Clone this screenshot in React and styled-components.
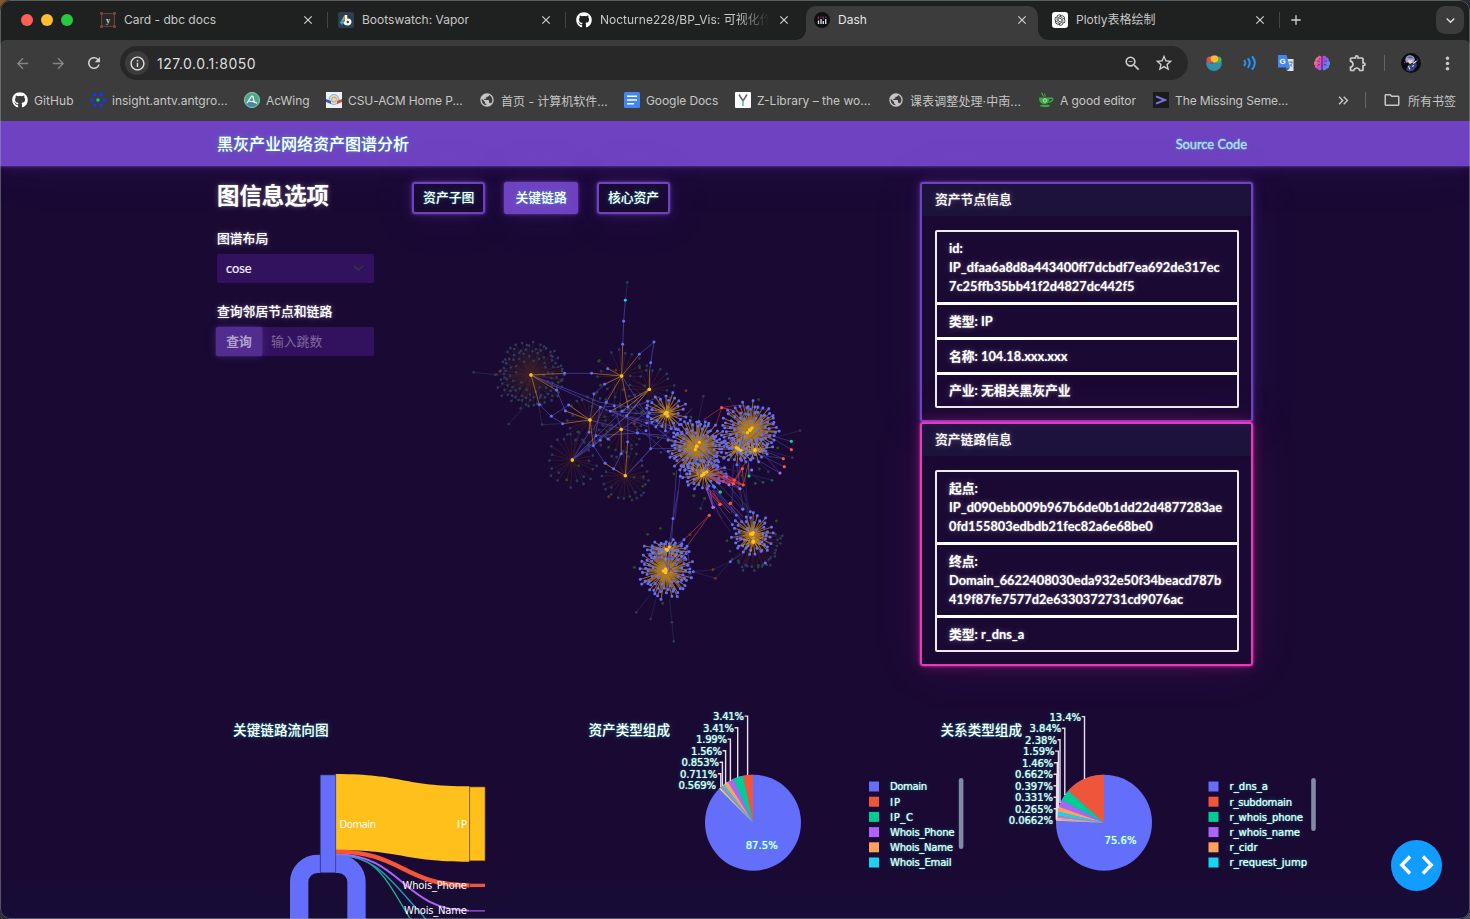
import React from "react";
import styled, { createGlobalStyle, css } from "styled-components";
import {
  MdArrowBack, MdArrowForward, MdRefresh, MdInfoOutline, MdStarBorder, MdZoomOut,
  MdOutlineExtension, MdMoreVert, MdOutlineFolder, MdClose, MdAdd, MdKeyboardArrowDown,
  MdPublic, MdKeyboardDoubleArrowRight,
} from "react-icons/md";
import { FaGithub } from "react-icons/fa";
import { RiOpenaiFill } from "react-icons/ri";

const glow = (rgb) => `0 0 2px rgba(${rgb},.9), 0 0 4px rgba(${rgb},.4), 0 0 13px rgba(${rgb},.3), 0 0 51px rgba(${rgb},.1)`;
const textGlow = (rgb) => `0 0 1px rgba(${rgb},.3), 0 0 2px rgba(${rgb},.3), 0 0 6px rgba(${rgb},.3)`;
const PURPLE = "111,66,193";
const PINK = "234,57,184";
const CYAN = "50,251,226";
const WHITE = "255,255,255";

const GlobalStyle = createGlobalStyle`
  * { box-sizing: border-box; }
  html, body { margin: 0; height: 919px; overflow: hidden; }
  body { background: linear-gradient(120deg, #8a5528 0, #2a2a33 30%, #2a2a33 75%, #4a4f55 100%); }
`;

/* ---------- browser window ---------- */
const Window = styled.div`
  position: relative;
  width: 1470px; height: 919px;
  display: flex; flex-direction: column;
  overflow: hidden;
  border-radius: 10px;
  background: #1f2120;
  font-family: Inter, "Noto Sans CJK SC", sans-serif;
  color: #c7c7c7;
  &::after {
    content: ""; position: absolute; inset: 0; border-radius: 10px; pointer-events: none;
    border: 1px solid rgba(160, 170, 170, 0.45);
  }
`;
const TabStrip = styled.div`
  flex: none; height: 40px; display: flex; align-items: center;
  position: relative; background: #1f2120;
`;
const Lights = styled.div`
  width: 90px; padding-left: 21px; display: flex; gap: 8px; flex: none;
`;
const Light = styled.i`
  width: 12px; height: 12px; border-radius: 50%; background: ${(p) => p.$c};
`;
const Tab = styled.div`
  position: relative; width: 238px; height: 40px; flex: none;
  display: flex; align-items: center; padding: 0 12px 0 10px; gap: 8px;
  font-size: 12px;
  & > * { position: relative; }
  & > svg { flex: none; }
  ${(p) => p.$active && css`
    color: #e6e6e6;
    &::before {
      content: ""; position: absolute; inset: 6px 4px 0 2px;
      border-radius: 10px 10px 0 0; background: #3c3c3c;
    }
    &::after {
      content: ""; position: absolute; left: -8px; right: -6px; bottom: 0; height: 10px;
      background:
        radial-gradient(circle at 0 0, transparent 9.5px, #3c3c3c 10px) left / 10px 10px no-repeat,
        radial-gradient(circle at 100% 0, transparent 9.5px, #3c3c3c 10px) right / 10px 10px no-repeat;
    }
  `}
`;
const TabTitle = styled.span`
  flex: 1; min-width: 0; white-space: nowrap; line-height: 18px;
  ${(p) => p.$fade && css`mask-image: linear-gradient(90deg, #000 82%, transparent 100%);`}
`;
const TabClose = styled(MdClose)`
  width: 14px; height: 14px; margin: 0 1px 0 0; flex: none; color: #d2d2d2;
`;
const Divider = styled.i`
  width: ${(p) => p.$w || 1}px; height: 16px; background: ${(p) => p.$c || "#454545"}; flex: none;
  margin: 0 ${(p) => p.$r || 0}px 0 ${(p) => p.$l || 0}px;
`;
const NewTab = styled(MdAdd)`width: 16px; height: 16px; margin-left: 8px; color: #d2d2d2;`;
const TabMenu = styled.div`
  margin: 0 6px 0 auto; width: 28px; height: 28px; border-radius: 9px; background: #3c3c3c;
  display: grid; place-items: center; color: #e0e0e0;
`;
const Toolbar = styled.div`
  flex: none; height: 46px; display: flex; align-items: center; padding-left: 12px;
  background: #3c3c3c; border-radius: 6px 6px 0 0;
`;
const NavIcon = styled.span`
  width: 20px; height: 20px; margin-right: 16px; display: grid; place-items: center;
  color: ${(p) => (p.$dim ? "#858585" : "#d0d0d0")};
`;
const Omnibox = styled.div`
  width: 1068px; height: 34px; border-radius: 17px; background: #282828; flex: none;
  display: flex; align-items: center; padding: 0 14px 0 5px;
`;
const SiteInfo = styled.span`
  width: 24px; height: 24px; border-radius: 50%; background: #3c3c3c; color: #e0e0e0;
  display: grid; place-items: center; margin-right: 8px;
`;
const Url = styled.span`flex: 1; font-size: 14px; color: #dedede; letter-spacing: 0.5px;`;
const OmniIcon = styled.span`width: 20px; height: 20px; display: grid; place-items: center; color: #cfcfcf; margin-left: 12px;`;
const Extensions = styled.div`flex: 1; display: flex; align-items: center; padding-left: 16px;`;
const Ext = styled.span`width: 20px; height: 20px; display: grid; place-items: center; margin-right: 16px; color: #cfcfcf;`;
const Bookmarks = styled.div`
  flex: none; height: 35px; padding: 0 14px 7px 12px; background: #3c3c3c;
  display: flex; align-items: center; font-size: 12px; color: #c6c6c6;
`;
const Bookmark = styled.div`
  width: ${(p) => p.$w}px; flex: none; display: flex; align-items: center; gap: 6px;
  white-space: nowrap; letter-spacing: ${(p) => p.$ls || 0}px;
  svg { flex: none; }
`;
const AllBookmarks = styled.div`display: flex; align-items: center; gap: 7px; white-space: nowrap;`;

/* ---------- dashboard page ---------- */
const Page = styled.div`
  flex: 1; display: flex; flex-direction: column; min-height: 0; overflow: hidden;
  background: linear-gradient(#1a0933 0, #1a0933 92%, #170d36 100%);
  font-family: Lato, "Noto Sans CJK SC", sans-serif; font-size: 12.8px; line-height: 19.2px; color: #fff;
`;
const Navbar = styled.header`
  flex: none; height: 45px; padding: 0 223px 0 217px;
  display: flex; align-items: center; justify-content: space-between;
  background: #6f42c1; box-shadow: ${glow(PURPLE)};
`;
const Brand = styled.span`font-size: 16px; font-weight: 500; text-shadow: ${textGlow(CYAN)};`;
const SourceLink = styled.a`
  color: #b4dcf2; text-shadow: ${textGlow(CYAN)}; -webkit-text-stroke: 0.35px #b4dcf2; padding-top: 2px;
`;
const Upper = styled.section`
  flex: none; height: 516px; padding: 16px 0 0 217px; display: flex; align-items: flex-start;
`;
const Options = styled.aside`width: 195px; flex: none; font-weight: 500; text-shadow: ${textGlow(WHITE)};`;
const Heading = styled.h1`margin: 0 0 18px; font-size: 22.4px; line-height: 28px; font-weight: 700;`;
const Label = styled.div`height: 20px; margin-bottom: 6px; line-height: 20px;`;
const Select = styled.div`
  width: 156.5px; height: 29px; margin-bottom: 18px; padding: 0 10px 0 9px; border-radius: 2px;
  background: #32125f; display: flex; align-items: center; justify-content: space-between;
  font-weight: 400; text-shadow: none; color: #f4f0fa; font-size: 12.8px; -webkit-text-stroke: 0.2px #f4f0fa;
`;
const InputGroup = styled.div`
  width: 156.5px; height: 29px; display: flex; border-radius: 2px; background: #32125f; text-shadow: none;
`;
const Query = styled.button`
  width: 46px; height: 29px; margin-left: -1px; padding: 0; border: 0; border-radius: 2px; background: #522d90;
  color: #b2a3c8; font: inherit; font-weight: 700;
  box-shadow: 0 0 2px rgba(${PURPLE},.7), 0 0 9px rgba(${PURPLE},.35);
`;
const Placeholder = styled.span`padding-left: 9px; line-height: 29px; font-weight: 400; color: #81689f;`;

const GraphColumn = styled.div`width: 508px; flex: none;`;
const ButtonRow = styled.div`display: flex; gap: 19px;`;
const GraphButton = styled.button`
  width: 73.4px; height: 32px; padding: 0; border: 2px solid #6f42c1; border-radius: 3px;
  background: ${(p) => (p.$filled ? "#6f42c1" : "transparent")};
  color: #fff; font: inherit; font-weight: 500;
  box-shadow: ${glow(PURPLE)}; text-shadow: ${textGlow(CYAN)};
`;
const GraphCanvas = styled.svg`display: block;`;

const InfoColumn = styled.div`width: 333px; flex: none;`;
const Card = styled.article`
  position: relative; border: 2px solid rgb(${(p) => p.$rgb}); border-radius: 3px; box-shadow: ${(p) => glow(p.$rgb)};
  text-shadow: ${textGlow(WHITE)};
`;
const CardHeader = styled.header`
  height: 32px; padding-left: 13px; line-height: 31px; font-weight: 500;
  background: rgba(34, 37, 72, 0.36);
`;
const InfoList = styled.ul`
  margin: 14px 12px 12px 13px; padding: 0; list-style: none; border: 2px solid rgba(255,255,255,.92); border-radius: 2px;
`;
const InfoItem = styled.li`
  height: ${(p) => p.$h - 1}px; padding: 1px 0 0 12px; display: flex; flex-direction: column; justify-content: center;
  font-weight: 700; white-space: nowrap; box-sizing: content-box;
  &:not(:first-child) { border-top: 3px solid #fff; }
`;
const InfoLine = styled.span`display: block;`;

const Charts = styled.section`flex: 1; min-height: 0; display: flex; padding-left: 217px;`;
const Chart = styled.svg`display: block; flex: none; overflow: visible;`;
const ChartTitle = styled.text`
  font: 500 13.6px "Noto Sans CJK SC", sans-serif; fill: #fff; text-shadow: ${textGlow(CYAN)};
`;
const ChartText = styled.text`
  font: 10px "DejaVu Sans", sans-serif; fill: #fff;
  ${(p) => !p.$plain && css`text-shadow: ${textGlow(CYAN)}; stroke: #fff; stroke-width: 0.2px;`}
`;
const DebugButton = styled.button`
  position: absolute; left: 1390.5px; top: 839.5px; width: 51px; height: 51px; border: 0; padding: 0;
  border-radius: 50%; background: #119dff; display: grid; place-items: center;
`;

/* ---------- small pictures ---------- */
const Svg16 = (props) => <svg width="16" height="16" viewBox="0 0 16 16" {...props} />;
const FramedY = () => (
  <Svg16>
    <rect x="1.5" y="1.5" width="13" height="13" fill="#2a2727" stroke="#6a3f3d" strokeWidth="1" />
    {[[0, 0], [13, 0], [0, 13], [13, 13]].map(([x, y]) => <rect key={x + "" + y} x={x} y={y} width="3" height="3" fill="#733f3d" />)}
    <text x="8" y="10.5" fontSize="8.5" fontWeight="700" fontFamily="Liberation Serif, serif" textAnchor="middle" fill="#d8d8d8">y</text>
  </Svg16>
);
const BootswatchIcon = () => (
  <Svg16>
    <rect width="16" height="16" rx="2" fill="#2c3e50" />
    <path d="M7 2.5 2 10.5 4 13z" fill="#3ba7dd" /><path d="M7 2.5 3.8 8 4.6 13z" fill="#27b584" /><path d="M7 2.5 5 6.5 6.4 12z" fill="#f39c33" />
    <path d="M7 3h2.2v3.7c2.4-.6 4.3.9 4.3 3.1 0 2.2-1.7 3.7-3.7 3.7-2.4 0-4.2-1.3-4.6-2.7L7 9z" fill="#fff" />
    <circle cx="9.8" cy="10" r="1.2" fill="#2c3e50" />
  </Svg16>
);
const DashIcon = () => (
  <Svg16>
    <circle cx="8" cy="8" r="8" fill="#101014" />
    <path d="M4.5 8.5V12M7 7V12M9.3 9V12M11.7 7V12" stroke="#e8e8ef" strokeWidth="1.3" />
    <path d="M4.5 4.5v2.8M7 4.5v1.3M9.3 4.5v3" stroke="#7b3a5c" strokeWidth="1.3" /><path d="M11.7 4.5v1.5" stroke="#4a4c9b" strokeWidth="1.3" />
  </Svg16>
);
const GptIcon = () => (
  <Svg16><rect width="16" height="16" rx="3" fill="#fff" /><RiOpenaiFill x="1.5" y="1.5" size={13} color="#222" /></Svg16>
);
const AntvIcon = () => (
  <Svg16>
    <path d="M8 8 4.5 2.5M8 8l3.5-5.5M8 8h6M8 8l3.5 5.5M8 8l-3.5 5.5M8 8H2" stroke="#1c3cc0" strokeWidth=".6" strokeDasharray="1 1" />
    {[[4.8, 2.5], [11.2, 2.5], [14.2, 8], [11.2, 13.5], [4.8, 13.5], [1.8, 8]].map(([x, y]) => <circle key={x + y * 20} cx={x} cy={y} r="1.8" fill="#1236ff" />)}
    <circle cx="8" cy="8" r="1.7" fill="#20c77a" />
  </Svg16>
);
const AcWingIcon = () => (
  <Svg16>
    <circle cx="8" cy="8" r="7.6" fill="#4aa88c" stroke="#a8d8c0" strokeWidth=".8" />
    <path d="M2 11.5A7 7 0 0 0 13 13L8 8z" fill="#4b86b8" />
    <path d="M3 11.2 7.3 4.5c.6-.9 1.6-.4 1.8.5l1.2 6M5.5 9.5h4l3.5 1.8" fill="none" stroke="#fff" strokeWidth="1.2" />
  </Svg16>
);
const CsuIcon = () => (
  <Svg16>
    <rect width="16" height="16" fill="#eef1f4" /><circle cx="8" cy="7.5" r="5" fill="#cfe0f3" stroke="#6f9bd0" strokeWidth=".8" />
    <path d="M0 7l5 2v3L0 10z" fill="#2e5fb0" /><path d="M16 7l-5 2v3l5-2z" fill="#c84a42" />
    <circle cx="8" cy="7.5" r="2.4" fill="none" stroke="#e5ac48" strokeWidth="1.2" />
  </Svg16>
);
const DocsIcon = () => (
  <Svg16><rect width="16" height="16" rx="1.5" fill="#4285f4" /><path d="M3 4.3h10M3 8h10M3 11.7h7" stroke="#fff" strokeWidth="1.5" /></Svg16>
);
const ZLibIcon = () => (
  <Svg16>
    <rect width="16" height="16" rx="1" fill="#fff" />
    <path d="M4 2.5 8 9l4-6.5" fill="none" stroke="#6a6a6a" strokeWidth="1.6" /><path d="M8 8.5V14" stroke="#58b6d8" strokeWidth="1.6" />
  </Svg16>
);
const CupIcon = () => (
  <Svg16>
    <path d="M1 5.5h10.5c0 4.5-1.5 6.5-5 6.5S1 10 1 5.5zM1.5 14c3 1.6 8 1.6 11 0l-2-1.2h-7z" fill="#3fa548" />
    <path d="M11 6.2h3c1.4 0 .8 4-3.4 4" fill="none" stroke="#3fa548" strokeWidth="1.5" />
    <path d="M3 .8c2.5 1 .5 2 3 3.8M7 1.5c-1 1 .8 2 0 3" fill="none" stroke="#3fa548" strokeWidth="1.1" />
    <circle cx="7" cy="8.5" r="1.7" fill="none" stroke="#c5f0c5" strokeWidth=".9" />
  </Svg16>
);
const PromptIcon = () => (
  <Svg16><rect width="16" height="16" fill="#1b1b1d" /><path d="M3 4.3 12 8l-9 3.7" fill="none" stroke="#7d73e6" strokeWidth="1.9" /></Svg16>
);
const BowlIcon = () => (
  <Svg16>
    <circle cx="4" cy="5" r="3.6" fill="#d6504e" /><circle cx="12" cy="5" r="3.6" fill="#58b046" />
    <path d="M5 5.5C3.5 2 6 .2 8.5.6c3-.6 4.5 2.2 3.3 5.4L8 8z" fill="#f8bd34" />
    <path d="M0 7.2c2 .3 3 1.2 5 1.2s6-.6 11-1.2C16 12 12.5 16 8 16S0 12 0 7.2z" fill="#2f8fae" />
  </Svg16>
);
const WavesIcon = () => (
  <Svg16 fill="none" stroke="#2492ee" strokeWidth="2.1" strokeLinecap="round">
    <path d="M2.6 5.8q1.5 2.2 0 4.4M6.3 3.8q3 4.2 0 8.4M10.5 2q4.6 6 0 12" />
  </Svg16>
);
const TranslateIcon = () => (
  <Svg16>
    <path d="M7 4h8.5v12H9z" fill="#dfe2e6" /><path d="M0 0h8.5l3.5 12.5H0z" fill="#4487ee" /><path d="m8 12.5 4 0-2.5 3.3z" fill="#2e62bd" />
    <text x="4.6" y="9.3" fontSize="8" fontWeight="700" fontFamily="Liberation Sans, sans-serif" textAnchor="middle" fill="#fff">G</text>
    <path d="M10.8 7.2h4M12.8 6v1.2M14.2 7.2c-.2 2-1.4 3.5-2.6 4.3M11.7 9c.6 1.2 1.5 2 2.6 2.6" fill="none" stroke="#62727f" strokeWidth=".8" />
  </Svg16>
);
const BrainIcon = () => (
  <Svg16>
    <defs><linearGradient id="brain" x1="0" x2="1" y1="0.3" y2="0.7"><stop offset="0" stopColor="#f48a3d" /><stop offset=".35" stopColor="#e445cf" /><stop offset=".6" stopColor="#9a55f5" /><stop offset="1" stopColor="#38a9f5" /></linearGradient></defs>
    <path d="M7.4 1.8C6.6.3 4.2.5 3.8 2.3 1.8 2.6.8 4.6 1.4 5.9c-2 .8-2.1 3.4-.4 4.4-.4 2 1 3.5 2.8 3.4.7 2 3.2 2.1 3.6.6zM8.6 1.8c.8-1.5 3.2-1.3 3.6.5 2 .3 3 2.3 2.4 3.6 2 .8 2.1 3.4.4 4.4.4 2-1 3.5-2.8 3.4-.7 2-3.2 2.1-3.6.6z" fill="url(#brain)" />
    <path d="M3 6.5c1-.8 2-.5 2.6.3M3.6 10.8c.4-1.4 1.5-1.6 2.3-1.2M13 6.5c-1-.8-2-.5-2.6.3M12.4 10.8c-.4-1.4-1.5-1.6-2.3-1.2M5 3.6l1 .8M11 3.6l-1 .8" fill="none" stroke="#3c3050" strokeWidth=".8" />
  </Svg16>
);
const Avatar = () => (
  <svg width="20" height="20" viewBox="0 0 20 20">
    <circle cx="10" cy="10" r="10" fill="#0d0b14" />
    <path d="M5 17l2-5 4-1 4-2 1 4-4 5-4 .5z" fill="#33417a" />
    <path d="M4.5 8C3.8 4.5 6 2 9.2 2.2c3 .2 4.8 2 4.6 4.8L12 10 8 8.5 5.5 10z" fill="#9aa6cf" />
    <path d="M7 7.2 11.5 7 11 10l-2 1-1.6-1.3z" fill="#efd3cc" /><path d="M5.5 4.8 9 3l4 2-3 .6z" fill="#5b6492" />
    <path d="M12 10.5l3.5-2.5M7.5 13l1.5 3.5M11 13.5l2-1" stroke="#d9dcf0" strokeWidth="1.1" />
    <circle cx="3.6" cy="9.5" r=".8" fill="#aa3750" /><circle cx="16.5" cy="7" r=".7" fill="#8a3750" />
  </svg>
);

/* ---------- network graph ---------- */
const random = (seed) => () => ((seed = (seed * 16807) % 2147483647) / 2147483647);

/* one hub with its leaves spread around it by the golden angle */
function Burst({ x, y, rx, ry = rx, n, inner = 0.4, seed = 7, dim, from = 0, to = 360, green = 0 }) {
  const rnd = random(seed * 7919);
  const nodes = Array.from({ length: n }, (_, i) => {
    const t = ((from + (((i * 137.508) % 360) / 360) * (to - from) + rnd() * 5) * Math.PI) / 180;
    const k = (inner + (1 - inner) * Math.sqrt((i + 0.5) / n)) * (0.88 + rnd() * 0.18);
    return [x + Math.cos(t) * rx * k, y + Math.sin(t) * ry * k];
  });
  const r = dim ? 3.9 : 4.2;
  const spokes = (k) => nodes.map(([a, b]) => `M${x} ${y}L${(x + (a - x) * k).toFixed(1)} ${(y + (b - y) * k).toFixed(1)}`).join("");
  return (
    <g>
      <path d={spokes(1)} stroke={dim ? "#6b421a" : "#bd8728"} strokeWidth={dim ? 2 : 3.2} opacity={dim ? 0.42 : 0.72} />
      {!dim && <path d={spokes(0.45)} stroke="#d69c27" strokeWidth="2.6" opacity="0.4" />}
      {nodes.map(([a, b], i) => (
        <rect key={i} x={a - r} y={b - r} width={2 * r} height={2 * r} rx="3"
          fill={dim ? (green && i === green ? "#275016" : "#2b3c5b") : "#6370f5"} />
      ))}
      <circle cx={x} cy={y} r={dim ? 5 : 6} fill="#fcc31c" />
    </g>
  );
}

const pairs = (s) => s.trim().split(/\s+/).map((p) => p.split(",").map(Number));
const Dots = ({ at, fill = "#6370f5", r = 4.4 }) => pairs(at).map(([x, y], i) => <circle key={i} cx={x} cy={y} r={r} fill={fill} />);
/* points of a line are separated by spaces, lines by "|" */
const Lines = ({ at, stroke = "#4b43a8", opacity = 0.75, w = 3 }) => (
  <path fill="none" stroke={stroke} strokeWidth={w} opacity={opacity}
    d={at.split("|").map((g) => "M" + pairs(g).map((p) => p.join(" ")).join("L")).join("")} />
);

const Network = () => (
  <GraphCanvas width="508" height="460" viewBox="412 214 508 460">
    <g transform="translate(460 270) scale(.33333)">
      <Lines stroke="#293150" opacity={0.7} at="41,307 106,314|146,462 193,410|246,464 235,400|246,464 308,461|502,37 496,91|463,408 463,340" />
      <Burst x={213} y={315} rx={106} ry={104} n={112} inner={0.3} seed={3} dim />
      <Burst x={485} y={318} rx={82} ry={88} n={20} inner={0.65} seed={4} dim green={9} />
      <Burst x={390} y={450} rx={77} ry={84} n={27} inner={0.6} seed={5} dim green={12} />
      <Burst x={484} y={478} rx={68} ry={78} n={20} inner={0.6} seed={6} dim green={14} />
      <Burst x={337} y={570} rx={78} ry={82} n={25} inner={0.65} seed={8} dim green={6} />
      <Burst x={496} y={617} rx={76} ry={80} n={25} inner={0.65} seed={9} dim green={11} />
      <Burst x={568} y={358} rx={78} ry={78} n={20} inner={0.65} seed={10} dim green={7} />
      <Lines at="496,91 491,154 488,223|538,253 582,216 569,300|314,310 395,310|290,361 316,423|238,404 274,439 308,461|274,439 326,405|402,372 434,343|402,372 390,450|213,315 421,397 504,411|213,315 451,424 563,470|387,487 337,570|408,497 337,570|421,511 337,570|337,570 503,437 568,358|421,412 400,527|439,397 400,480|400,527 435,580 461,597|400,527 500,437|503,516 504,411|485,318 563,440|390,450 533,489 620,497|337,570 486,424 600,380|451,424 660,440|484,478 600,400|484,551 461,597|496,617 570,540 697,415|563,394 563,440|421,412 463,408 484,478|563,440 620,470|451,424 560,459 650,480|533,489 408,497" />
      <Lines stroke="#b37628" at="488,223 485,318|538,253 485,318|443,296 485,318|485,318 434,343|485,318 439,397|485,318 504,411|485,318 395,310|213,315 314,310|213,315 290,361|213,315 238,404|390,450 308,461|390,450 316,423|390,450 326,405|390,450 421,412|390,450 400,527|390,450 387,487|484,478 484,551|484,478 444,507|503,516 496,617|461,597 496,617|568,358 486,424|568,358 451,424|568,358 569,300|568,358 500,437|435,580 461,597" />
      <Dots at="491,154 488,223 538,253 582,216 572,278 314,310 395,310 443,296 434,343 402,372 439,397 421,412 463,408 504,411 451,424 486,424 500,437 290,361 238,404 274,439 308,461 316,423 326,405 387,487 408,497 421,511 400,527 444,507 503,516 533,489 484,551 435,580 461,597 563,440 560,415 558,482 563,394 560,459" />
      <Dots at="496,91" fill="#16d8e0" />
      <Dots fill="#144d52" r={4} at="502,37 366,545" />
      <Dots fill="#2b3c5b" r={4} at="41,307 106,314 146,462 246,464" />
      <Dots fill="#295011" at="418,271 295,337 396,409 441,485 356,587 548,649 545,427" r={4} />
      <Dots fill="#773616" at="120,304 468,300 524,461 446,680" r={4} />
      <Dots fill="#fcc31c" r={5} at="213,315 485,318 390,450 484,478 337,570 496,617 568,358" />
    </g>
    <g transform="translate(630 380) scale(.33333)">
      <Lines opacity={0.6} at="0,75 150,205|0,110 150,145|0,125 140,240|22,159 130,180|54,109 62,206 200,205|62,206 0,275|0,60 120,160|155,250 135,416|54,109 150,150|110,100 155,165 200,205|280,170 330,200|290,230 325,207|484,209 370,140|484,184 360,150|460,236 325,180|463,260 340,200|450,279 325,207|408,228 460,236|380,200 450,279|310,250 305,400|320,250 340,390|330,230 325,330|355,240 357,288|245,290 338,388|260,275 355,385|235,310 330,410|110,175 200,205|90,150 150,200|380,170 400,230|350,120 330,200|326,75 420,92" />
      <Lines stroke="#2b2b52" opacity={0.7} at="220,49 205,125|298,56 320,90|510,152 443,170|487,233 408,210|415,275 380,240|335,315 360,390|345,290 355,400|240,180 400,310|205,245 425,300" />
      <Lines stroke="#bf3b48" opacity={0.7} at="275,83 220,120|275,83 258,135|275,83 326,75|275,83 335,98|275,83 312,92" w={2.5} />
      <Burst x={110} y={98} rx={60} ry={62} n={27} inner={0.5} seed={12} />
      <Burst x={200} y={200} rx={90} ry={88} n={104} inner={0.24} seed={13} />
      <Burst x={222} y={282} rx={72} ry={50} n={36} inner={0.4} seed={14} />
      <Burst x={325} y={207} rx={56} ry={50} n={26} inner={0.4} seed={16} />
      <Burst x={360} y={150} rx={90} ry={86} n={96} inner={0.22} seed={15} />
      <Burst x={375} y={210} rx={52} ry={42} n={14} inner={0.4} seed={26} />
      <Lines opacity={0.55} at="222,282 290,270|230,290 300,300|200,205 290,275|240,250 310,300|235,225 225,290|190,230 210,290|325,207 390,150|250,260 330,325|340,160 330,215|150,150 270,270" />
      <Lines stroke="#cd3c4c" opacity={0.75} w={2.7} at="230,270 310,311|235,275 340,315|245,265 313,300|252,280 310,311|222,290 340,315|260,270 330,326|240,295 300,311|337,266 310,311|348,245 313,300|355,250 340,315|337,266 340,315|270,290 313,300|250,300 313,311|225,325 270,373|235,325 300,400|283,280 340,315|262,285 340,315" />
      <Lines stroke="#8c4eca" opacity={0.45} at="222,285 297,314|228,320 250,382|240,290 330,326|220,310 275,416" />
      <Lines stroke="#158f75" opacity={0.6} at="357,288 356,250|270,336 225,290" />
      <Dots at="22,159 54,109 62,206 151,289 338,388 264,260 290,290 268,310 254,322" />
      <Dots fill="#fcc31c" r={5} at="105,101 113,108 200,198 196,209 208,187 222,282 230,276 215,287 360,150 352,158 366,144 325,207 319,203 332,211 58,28" />
      <Dots fill="#fa563c" r={4.8} at="275,83 337,266 313,300 310,311 340,315 270,373 301,370 484,209 460,236 463,260" />
      <Dots fill="#b069f5" r={4.6} at="365,270 297,314 330,326 250,382 450,279" />
      <Dots fill="#10cf98" r={4.8} at="484,184 357,288 270,336" />
      <Dots fill="#295011" r={4.2} at="183,111 386,59 35,97 85,173 132,282 192,348 224,355 443,204 388,267 336,287" />
      <Dots fill="#14604a" r={4.2} at="376,310 399,307 426,301" />
      <Dots fill="#2b3c5b" r={4} at="298,56 93,217 204,245 415,275 212,386 12,292 40,292 6,360 34,346" />
      <Dots fill="#4a2c55" r={4} at="220,49 510,152 487,233" /><Dots fill="#773616" r={4} at="168,32 14,130" />
    </g>
    <g transform="translate(610 490) scale(.33333)">
      <Lines opacity={0.65} at="205,0 189,86 176,178|189,86 180,240|200,-60 189,86|176,178 222,149 165,215|231,169 241,240|222,149 180,200|361,215 401,187 430,150|300,0 379,76|310,0 400,100|320,0 423,125|250,245 170,248|290,0 367,104|232,170 180,230|250,245 200,290" />
      <Lines stroke="#2b2b52" opacity={0.7} at="309,52 362,126|250,245 309,239 361,215 316,265 250,245|79,367 120,315|122,387 138,326|191,454 186,397 178,327|365,0 400,58|380,-10 421,90|400,0 425,120|272,55 284,25" />
      <Lines stroke="#bc3b48" opacity={0.8} w={2.6} at="298,76 222,149|298,76 231,169|361,40 399,80|330,43 295,0|330,43 308,0" />
      <Lines stroke="#8c4eca" opacity={0.7} at="309,52 290,0|309,52 300,0" />
      <Burst x={430} y={145} rx={86} ry={98} n={24} inner={0.75} seed={18} from={-10} to={140} dim green={5} />
      <Burst x={172} y={180} rx={70} ry={32} n={26} inner={0.4} seed={19} />
      <Burst x={167} y={243} rx={84} ry={86} n={84} inner={0.3} seed={20} />
      <Burst x={427} y={132} rx={68} ry={62} n={38} inner={0.4} seed={21} />
      <Burst x={430} y={155} rx={52} ry={50} n={10} inner={0.4} seed={22} />
      <Lines opacity={0.7} at="176,178 170,240|182,180 178,245|120,170 190,245|230,190 170,250|110,190 230,210" />
      <Dots at="189,86 222,149 231,169 250,245 361,215 399,58 421,65 379,76 367,104 466,219" />
      <Dots fill="#fcc31c" r={5} at="172,180 178,171 169,178 167,237 167,248 160,243 422,132 429,128 430,156" />
      <Dots fill="#fa563c" r={4.8} at="298,76 330,43 361,40" /><Dots fill="#b069f5" r={4.8} at="309,52" /><Dots fill="#10cf98" r={4.8} at="331,6" />
      <Dots fill="#295011" r={4.2} at="151,115 113,133 73,232 158,340 251,17 284,25 351,152 499,93 445,226" />
      <Dots fill="#773616" r={4.2} at="240,134 309,239 316,265" />
      <Dots fill="#2b3c5b" r={4} at="186,397 191,454 272,55 512,145 360,184" /><Dots fill="#4a2c55" r={4} at="79,367 122,387" />
    </g>
  </GraphCanvas>
);

/* ---------- charts ---------- */
const Sankey = () => (
  <Chart width="353" height="237" viewBox="217 682 353 237">
    <ChartTitle x="233" y="735" textLength="95.5">关键链路流向图</ChartTitle>
    <g transform="translate(210 700) scale(.33333)">
      <path d="M330 464H322A82 82 0 0 0 240 546V660H295V546A27 27 0 0 1 322 519H330z" fill="#636efa" />
      <path d="M377 464H385A82 82 0 0 1 467 546V660H412V546A27 27 0 0 0 385 519H377z" fill="#636efa" />
      <path d="M377 222C578 222 578 259 778 259V485C578 485 578 450 377 450z" fill="#ffc01c" />
      <path d="M377 466C500 466 520 525 603 660" fill="none" stroke="#12b692" strokeWidth="4" />
      <path d="M377 465C500 465 540 540 650 660" fill="none" stroke="#1d9cb4" strokeWidth="4" />
      <path d="M377 463C578 463 578 632 778 632" fill="none" stroke="#ab63fa" strokeWidth="6" />
      <path d="M377 455C578 455 578 556 778 556" fill="none" stroke="#f4553b" strokeWidth="13" />
      <path d="M331 225H377V518H331z" fill="#636efa" stroke="#353b8c" strokeWidth="2" />
      <path d="M779 261H825V482H779z" fill="#ffc01c" stroke="#8a6515" strokeWidth="2" />
      <path d="M779 551H825V561H779z" fill="#ef553b" /><path d="M779 630H825V635H779z" fill="#8348b8" />
    </g>
    <ChartText $plain x="339.5" y="827.5" textLength="36.5">Domain</ChartText>
    <ChartText $plain x="457" y="827.5" textLength="10">IP</ChartText>
    <ChartText $plain x="402.5" y="888.7" textLength="64.5">Whois_Phone</ChartText>
    <ChartText $plain x="404" y="914.2" textLength="63">Whois_Name</ChartText>
  </Chart>
);

const SLICE_COLORS = ["#ef553b", "#00cc96", "#ab63fa", "#ffa15a", "#19d3f3", "#ff6692", "#b6e880", "#ff97ff", "#fecb52", "#636efa"];
function Pie({ cx, cy, r, slices }) {
  let angle = 0;
  const point = (pct) => [cx - r * Math.sin(pct * 0.0628319), cy - r * Math.cos(pct * 0.0628319)];
  return (
    <g>
      <circle cx={cx} cy={cy} r={r} fill="#636efa" />
      {slices.map((v, i) => {
        const [x1, y1] = point(angle);
        angle += v;
        const [x2, y2] = point(angle);
        return <path key={i} d={`M${cx} ${cy}L${x1} ${y1}A${r} ${r} 0 0 0 ${x2} ${y2}z`} fill={SLICE_COLORS[i]} />;
      })}
    </g>
  );
}
const LEGEND_COLORS = ["#636efa", "#ef553b", "#00cc96", "#ab63fa", "#ffa15a", "#19d3f3"];
const Legend = ({ x, items, barX, barH }) => (
  <g>
    {items.map(([name, w], i) => (
      <g key={name}>
        <rect x={x} y={781.5 + i * 15.2} width="10" height="10" fill={LEGEND_COLORS[i]} />
        <ChartText x={x + 21} y={790.3 + i * 15.2} textLength={w}>{name}</ChartText>
      </g>
    ))}
    <rect x={barX} y="778" width="4.6" height={barH} rx="2.3" fill="#808ba4" />
  </g>
);
/* label: [text, left, right, y, leader x, leader end y] */
const PieLabels = ({ labels }) => labels.map(([t, x1, x2, y, lx, ly]) => (
  <g key={t + y}>
    {lx && <path d={`M${x2 + 0.6} ${y - 0.6}H${lx}V${ly}`} fill="none" stroke="#e6dfee" strokeWidth="1.4" />}
    <ChartText x={x1} y={y + 3.5} textLength={x2 - x1}>{t}</ChartText>
  </g>
));

const AssetPie = () => (
  <Chart width="350" height="237" viewBox="570 682 350 237">
    <ChartTitle x="588.5" y="735" textLength="81.5">资产类型组成</ChartTitle>
    <Pie cx={753} cy={822.7} r={48} slices={[3.41, 3.41, 1.99, 1.56, 0.853, 0.711, 0.569]} />
    <PieLabels labels={[
      ["3.41%", 713, 744, 716.7, 747.6, 775], ["3.41%", 703, 734, 728.3, 737.7, 777.5], ["1.99%", 696, 727, 739.7, 730.4, 781],
      ["1.56%", 691, 722, 751.3, 725.6, 784], ["0.853%", 681.5, 719, 762.8, 722.4, 786], ["0.711%", 680, 717.3, 774.3, 720.8, 787],
      ["0.569%", 678.5, 716, 785.8],
    ]} />
    <ChartText x="745.7" y="848.7" textLength="32">87.5%</ChartText>
    <Legend x={869} barX={958.8} barH={71} items={[["Domain", 37], ["IP", 10], ["IP_C", 23], ["Whois_Phone", 64.5], ["Whois_Name", 63], ["Whois_Email", 61.5]]} />
  </Chart>
);
const RelationPie = () => (
  <Chart width="420" height="237" viewBox="920 682 420 237">
    <ChartTitle x="940.5" y="735" textLength="81.5">关系类型组成</ChartTitle>
    <Pie cx={1104} cy={822.7} r={48} slices={[13.4, 3.84, 2.38, 1.59, 1.46, 0.662, 0.397, 0.331, 0.265, 0.066]} />
    <PieLabels labels={[
      ["13.4%", 1049.5, 1081, 717.2, 1084.5, 779], ["3.84%", 1029.5, 1061.3, 728.8, 1064.8, 795], ["2.38%", 1025, 1057, 740.3, 1060, 803],
      ["1.59%", 1023, 1054.5, 751.7, 1058.4, 808], ["1.46%", 1022, 1053.3, 763.3, 1057.3, 814], ["0.662%", 1015, 1053, 774.8, 1056.8, 817],
      ["0.397%", 1015, 1053, 786.4, 1056.6, 818], ["0.331%", 1015, 1053, 797.8, 1056.6, 819], ["0.265%", 1015, 1053, 809.3, 1056.4, 820],
      ["0.0662%", 1008.7, 1053, 820.8],
    ]} />
    <ChartText x="1104.5" y="843.7" textLength="32">75.6%</ChartText>
    <Legend x={1208.5} barX={1311.2} barH={53} items={[["r_dns_a", 38.5], ["r_subdomain", 62.5], ["r_whois_phone", 73.5], ["r_whois_name", 70.5], ["r_cidr", 28], ["r_request_jump", 77.5]]} />
  </Chart>
);

const BOOKMARKS = [
  [<FaGithub size={16} color="#fff" />, "GitHub", 78, 0.1],
  [<AntvIcon />, "insight.antv.antgro...", 154],
  [<AcWingIcon />, "AcWing", 82],
  [<CsuIcon />, "CSU-ACM Home P...", 153, -0.08],
  [<MdPublic size={16} />, "首页 - 计算机软件...", 145],
  [<DocsIcon />, "Google Docs", 111, -0.08],
  [<ZLibIcon />, "Z-Library – the wo...", 153],
  [<MdPublic size={16} />, "课表调整处理·中南...", 150, 0.1],
  [<CupIcon />, "A good editor", 115, -0.08],
  [<PromptIcon />, "The Missing Seme...", 182, -0.1],
];

export default function App() {
  return (
    <>
      <GlobalStyle />
      <Window>
        <TabStrip>
          <Lights><Light $c="#ff5f57" /><Light $c="#febc2e" /><Light $c="#28c840" /></Lights>
          <Tab><FramedY /><TabTitle>Card - dbc docs</TabTitle><TabClose /></Tab>
          <Divider $l={-1} />
          <Tab><BootswatchIcon /><TabTitle>Bootswatch: Vapor</TabTitle><TabClose /></Tab>
          <Divider $l={-1} />
          <Tab><FaGithub size={16} color="#fff" /><TabTitle $fade>Nocturne228/BP_Vis: 可视化作</TabTitle><TabClose /></Tab>
          <Tab $active><DashIcon /><TabTitle>Dash</TabTitle><TabClose /></Tab>
          <Tab><GptIcon /><TabTitle>Plotly表格绘制</TabTitle><TabClose /></Tab>
          <Divider $l={-1} />
          <NewTab />
          <TabMenu><MdKeyboardArrowDown size={17} /></TabMenu>
        </TabStrip>
        <Toolbar>
          <NavIcon $dim><MdArrowBack size={17} /></NavIcon>
          <NavIcon $dim><MdArrowForward size={17} /></NavIcon>
          <NavIcon><MdRefresh size={18} /></NavIcon>
          <Omnibox>
            <SiteInfo><MdInfoOutline size={17} /></SiteInfo>
            <Url>127.0.0.1:8050</Url>
            <OmniIcon><MdZoomOut size={19} /></OmniIcon>
            <OmniIcon><MdStarBorder size={20} /></OmniIcon>
          </Omnibox>
          <Extensions>
            <Ext><BowlIcon /></Ext><Ext><WavesIcon /></Ext><Ext><TranslateIcon /></Ext><Ext><BrainIcon /></Ext>
            <Ext><MdOutlineExtension size={20} /></Ext>
            <Divider $c="#636363" $r={16} />
            <Ext><Avatar /></Ext>
            <MdMoreVert size={21} />
          </Extensions>
        </Toolbar>
        <Bookmarks>
          {BOOKMARKS.map(([icon, name, w, ls]) => <Bookmark key={name} $w={w} $ls={ls}>{icon}<span>{name}</span></Bookmark>)}
          <MdKeyboardDoubleArrowRight size={19} />
          <Divider $c="#636363" $l={13} $r={17} />
          <AllBookmarks><MdOutlineFolder size={18} /><span>所有书签</span></AllBookmarks>
        </Bookmarks>

        <Page>
          <Navbar><Brand>黑灰产业网络资产图谱分析</Brand><SourceLink>Source Code</SourceLink></Navbar>
          <Upper>
            <Options>
              <Heading>图信息选项</Heading>
              <Label>图谱布局</Label>
              <Select>
                <span>cose</span>
                <svg width="11" height="7" viewBox="0 0 11 7" fill="none" stroke="#343a40" strokeWidth="1.3"><path d="m1 1 4.5 4L10 1" /></svg>
              </Select>
              <Label>查询邻居节点和链路</Label>
              <InputGroup><Query>查询</Query><Placeholder>输入跳数</Placeholder></InputGroup>
            </Options>
            <GraphColumn>
              <ButtonRow>
                <GraphButton>资产子图</GraphButton><GraphButton $filled>关键链路</GraphButton><GraphButton>核心资产</GraphButton>
              </ButtonRow>
              <Network />
            </GraphColumn>
            <InfoColumn>
              <Card $rgb={PURPLE}>
                <CardHeader>资产节点信息</CardHeader>
                <InfoList>
                  <InfoItem $h={70}><InfoLine>id:</InfoLine><InfoLine>IP_dfaa6a8d8a443400ff7dcbdf7ea692de317ec</InfoLine><InfoLine>7c25ffb35bb41f2d4827dc442f5</InfoLine></InfoItem>
                  <InfoItem $h={32}><InfoLine>类型: IP</InfoLine></InfoItem>
                  <InfoItem $h={32}><InfoLine>名称: 104.18.xxx.xxx</InfoLine></InfoItem>
                  <InfoItem $h={31}><InfoLine>产业: 无相关黑灰产业</InfoLine></InfoItem>
                </InfoList>
              </Card>
              <Card $rgb={PINK}>
                <CardHeader>资产链路信息</CardHeader>
                <InfoList>
                  <InfoItem $h={70}><InfoLine>起点:</InfoLine><InfoLine>IP_d090ebb009b967b6de0b1dd22d4877283ae</InfoLine><InfoLine>0fd155803edbdb21fec82a6e68be0</InfoLine></InfoItem>
                  <InfoItem $h={70}><InfoLine>终点:</InfoLine><InfoLine>Domain_6622408030eda932e50f34beacd787b</InfoLine><InfoLine>419f87fe7577d2e6330372731cd9076ac</InfoLine></InfoItem>
                  <InfoItem $h={32}><InfoLine>类型: r_dns_a</InfoLine></InfoItem>
                </InfoList>
              </Card>
            </InfoColumn>
          </Upper>
          <Charts><Sankey /><AssetPie /><RelationPie /></Charts>
        </Page>
        <DebugButton aria-label="debug">
          <svg width="35" height="20" viewBox="0 0 35 20" fill="none" stroke="#fff" strokeWidth="3.4"><path d="M11 1.5 2.8 10l8.2 8.5M24 1.5l8.2 8.5-8.2 8.5" /></svg>
        </DebugButton>
      </Window>
    </>
  );
}
